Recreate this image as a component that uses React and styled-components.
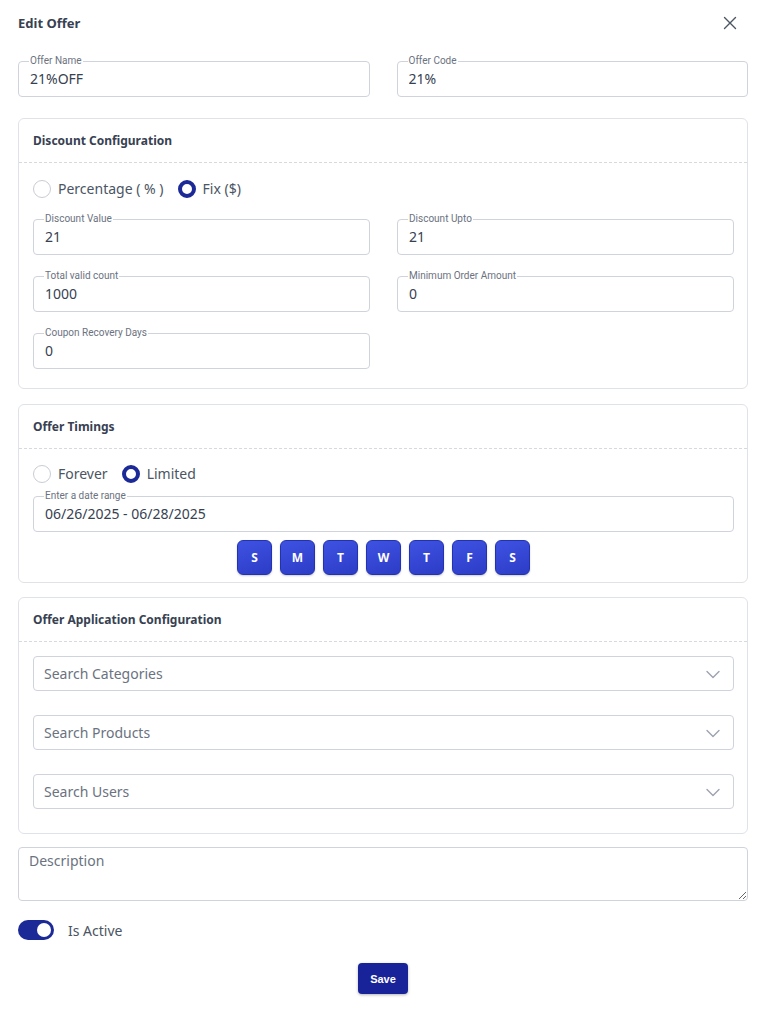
import React from "react";
import styled, { createGlobalStyle } from "styled-components";

const GlobalStyle = createGlobalStyle`
  body {
    margin: 0;
    background: #ffffff;
    font-family: "Noto Sans", "Open Sans", Arial, sans-serif;
    color: #374151;
  }
  * { box-sizing: border-box; }
`;

const Page = styled.div`
  width: 766px;
  padding: 0 18px 20px;
`;

const Header = styled.div`
  display: flex;
  align-items: center;
  justify-content: space-between;
  height: 46px;
`;

const Title = styled.h1`
  margin: 0;
  font-size: 13px;
  font-weight: 700;
  color: #374151;
`;

const CloseButton = styled.button`
  border: none;
  background: none;
  padding: 0;
  margin-right: 10px;
  display: flex;
  color: #4b5563;
  cursor: pointer;
`;

const Form = styled.form`
  display: flex;
  flex-direction: column;
`;

const TwoCols = styled.div`
  display: grid;
  grid-template-columns: 1fr 1fr;
  column-gap: 27px;
  row-gap: 15px;
  margin-top: ${(p) => p.$top || 0}px;
`;

const Field = styled.fieldset`
  margin: 0;
  padding: 0 10px 7px 11px;
  border: 1px solid #cfd3db;
  border-radius: 4px;
  min-width: 0;
`;

const Legend = styled.legend`
  font-family: Roboto, "Liberation Sans", Arial, sans-serif;
  font-size: 10px;
  line-height: 12px;
  color: #6b7280;
  padding: 0 1px;
  margin-left: -1px;
`;

const Input = styled.input`
  display: block;
  width: 100%;
  height: 22px;
  border: none;
  outline: none;
  padding: 0;
  font-family: inherit;
  font-size: 14px;
  color: #374151;
  background: transparent;
`;

const Card = styled.section`
  border: 1px solid #dfe2e7;
  border-radius: 6px;
  margin-top: ${(p) => p.$top || 15}px;
`;

const CardHeader = styled.div`
  height: 44px;
  display: flex;
  align-items: center;
  padding: 0 14px;
  border-bottom: 1px dashed #d6d9de;
  font-size: 12px;
  font-weight: 700;
  color: #374151;
`;

const CardBody = styled.div`
  padding: ${(p) => p.$pad};
  display: flex;
  flex-direction: column;
`;

const RadioRow = styled.div`
  display: flex;
  align-items: center;
  gap: 14px;
  margin-bottom: ${(p) => p.$after}px;
`;

const RadioOption = styled.label`
  display: flex;
  align-items: center;
  gap: 7px;
  font-size: 14px;
  color: #4b5563;
`;

const RadioDot = styled.span`
  width: 18px;
  height: 18px;
  border-radius: 50%;
  border: ${(p) => (p.$on ? "4px solid #1b2a96" : "1px solid #c9ccd3")};
  background: #fff;
`;

const DayRow = styled.div`
  display: flex;
  justify-content: center;
  gap: 8px;
  margin-top: 8px;
`;

const DayButton = styled.button`
  width: 35px;
  height: 35px;
  border-radius: 6px;
  border: 1px solid #2232b0;
  background: linear-gradient(160deg, #3e52e2 0%, #2c3cc6 100%);
  color: #ffffff;
  font-family: "Noto Sans", Arial, sans-serif;
  font-size: 12px;
  font-weight: 700;
  box-shadow: 0 1px 2px rgba(0, 0, 0, 0.2);
  padding: 0;
`;

const SelectStack = styled.div`
  display: flex;
  flex-direction: column;
  gap: 24px;
`;

const Select = styled.div`
  height: 35px;
  border: 1px solid #cfd3db;
  border-radius: 4px;
  display: flex;
  align-items: center;
  justify-content: space-between;
  padding: 0 12px 0 10px;
  font-size: 14px;
  color: #6b7280;
`;

const Textarea = styled.textarea`
  margin-top: 13px;
  height: 54px;
  width: 100%;
  border: 1px solid #cfd3db;
  border-radius: 4px;
  padding: 3px 10px;
  font-family: inherit;
  font-size: 14px;
  color: #374151;
  resize: vertical;
  outline: none;
  &::placeholder { color: #6b7280; }
`;

const ToggleRow = styled.div`
  display: flex;
  align-items: center;
  gap: 14px;
  margin-top: 19px;
  font-size: 14px;
  color: #4b5563;
`;

const Toggle = styled.span`
  width: 36px;
  height: 20px;
  border-radius: 10px;
  background: #1b2a96;
  display: flex;
  align-items: center;
  justify-content: flex-end;
  padding: 0 3px;
  &::after {
    content: "";
    width: 14px;
    height: 14px;
    border-radius: 50%;
    background: #fff;
  }
`;

const SaveRow = styled.div`
  display: flex;
  justify-content: center;
  margin-top: 23px;
`;

const SaveButton = styled.button`
  width: 50px;
  height: 31px;
  border: none;
  border-radius: 4px;
  background: #18239a;
  color: #fff;
  font-family: "Liberation Sans", Arial, sans-serif;
  font-size: 11px;
  font-weight: 700;
  box-shadow: 0 1px 3px rgba(0, 0, 0, 0.3);
`;

const Chevron = () => (
  <svg width="16" height="16" viewBox="0 0 16 16" fill="none" stroke="#9ca3af" strokeWidth="1.4" strokeLinecap="round" strokeLinejoin="round">
    <path d="M2 5.5l6 6 6-6" />
  </svg>
);

const TextField = ({ label, value }) => (
  <Field>
    <Legend>{label}</Legend>
    <Input defaultValue={value} />
  </Field>
);

const Radio = ({ label, on }) => (
  <RadioOption>
    <RadioDot $on={on} />
    {label}
  </RadioOption>
);

const days = ["S", "M", "T", "W", "T", "F", "S"];

export default function App() {
  return (
    <Page>
      <GlobalStyle />
      <Header>
        <Title>Edit Offer</Title>
        <CloseButton type="button">
          <svg width="16" height="16" viewBox="0 0 16 16" fill="none" stroke="#4b5563" strokeWidth="1.4" strokeLinecap="round">
            <path d="M2.5 2.5l11 11M13.5 2.5l-11 11" />
          </svg>
        </CloseButton>
      </Header>
      <Form>
        <TwoCols $top={9}>
          <TextField label="Offer Name" value="21%OFF" />
          <TextField label="Offer Code" value="21%" />
        </TwoCols>

        <Card $top={21}>
          <CardHeader>Discount Configuration</CardHeader>
          <CardBody $pad="16px 13px 19px 14px">
            <RadioRow $after={15}>
              <Radio label="Percentage ( % )" />
              <Radio label="Fix ($)" on />
            </RadioRow>
            <TwoCols>
              <TextField label="Discount Value" value="21" />
              <TextField label="Discount Upto" value="21" />
              <TextField label="Total valid count" value="1000" />
              <TextField label="Minimum Order Amount" value="0" />
              <TextField label="Coupon Recovery Days" value="0" />
            </TwoCols>
          </CardBody>
        </Card>

        <Card>
          <CardHeader>Offer Timings</CardHeader>
          <CardBody $pad="15px 13px 7px 14px">
            <RadioRow $after={7}>
              <Radio label="Forever" />
              <Radio label="Limited" on />
            </RadioRow>
            <TextField label="Enter a date range" value="06/26/2025 - 06/28/2025" />
            <DayRow>
              {days.map((d, i) => (
                <DayButton type="button" key={i}>{d}</DayButton>
              ))}
            </DayRow>
          </CardBody>
        </Card>

        <Card $top={14}>
          <CardHeader>Offer Application Configuration</CardHeader>
          <CardBody $pad="14px 13px 24px 14px">
            <SelectStack>
              {["Search Categories", "Search Products", "Search Users"].map((s) => (
                <Select key={s}>
                  {s}
                  <Chevron />
                </Select>
              ))}
            </SelectStack>
          </CardBody>
        </Card>

        <Textarea placeholder="Description" />

        <ToggleRow>
          <Toggle />
          Is Active
        </ToggleRow>

        <SaveRow>
          <SaveButton type="button">Save</SaveButton>
        </SaveRow>
      </Form>
    </Page>
  );
}
